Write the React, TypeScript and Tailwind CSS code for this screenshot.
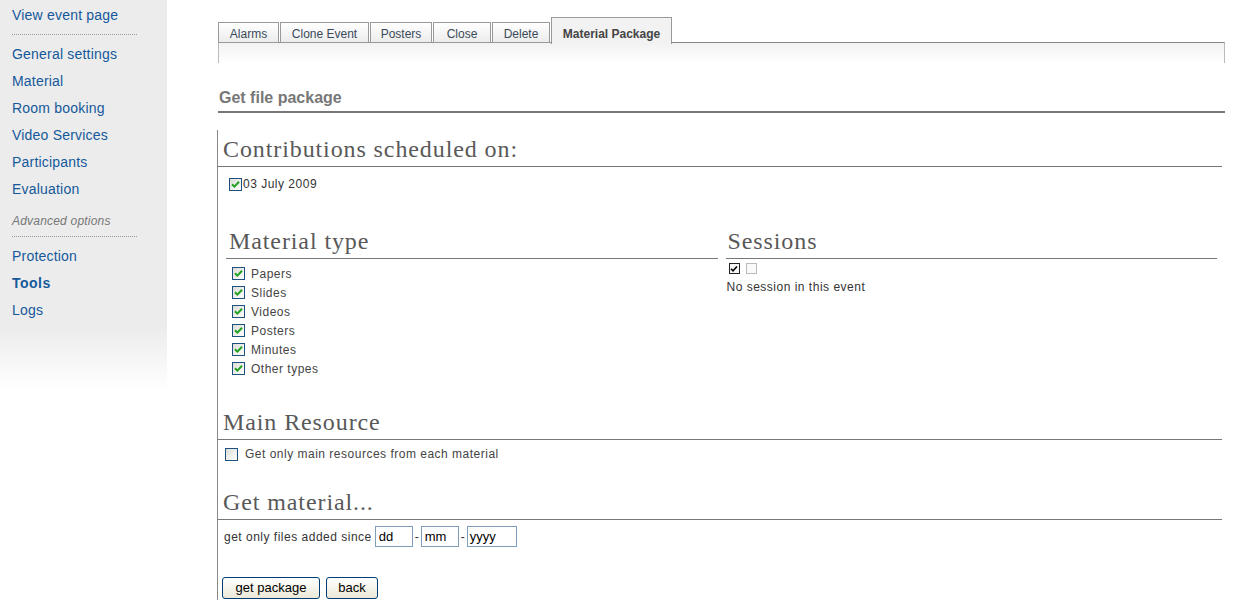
import React from 'react';

const sideLinks = ['General settings', 'Material', 'Room booking', 'Video Services', 'Participants', 'Evaluation'];

const tabs = [
  { label: 'Alarms', w: 'w-[61px]' },
  { label: 'Clone Event', w: 'w-[89px]' },
  { label: 'Posters', w: 'w-[62px]' },
  { label: 'Close', w: 'w-[58px]' },
  { label: 'Delete', w: 'w-[58px]' },
];

const materialTypes = ['Papers', 'Slides', 'Videos', 'Posters', 'Minutes', 'Other types'];

function XpCheck({ checked }: { checked: boolean }) {
  return (
    <span className="flex h-[13px] w-[13px] shrink-0 items-center justify-center border border-[#1c5180] bg-[linear-gradient(135deg,#dcdcd7,#ffffff)]">
      {checked && (
        <svg width="9" height="9" viewBox="0 0 9 9">
          <path d="M1 4.2 L3.4 6.6 L8 1.8" fill="none" stroke="#21a121" strokeWidth="2" />
        </svg>
      )}
    </span>
  );
}

function SmallCheck({ checked }: { checked: boolean }) {
  return (
    <span
      className={`flex h-[11px] w-[11px] items-center justify-center border ${
        checked ? 'border-[#222] bg-[#f4f4f4]' : 'border-[#bbb] bg-[#fafafa]'
      }`}
    >
      {checked && (
        <svg width="8" height="8" viewBox="0 0 8 8">
          <path d="M1 3.8 L3 5.8 L7 1.5" fill="none" stroke="#000" strokeWidth="1.6" />
        </svg>
      )}
    </span>
  );
}

function SectionTitle({ children, className = '' }: { children: React.ReactNode; className?: string }) {
  return (
    <div
      className={`border-b border-[#777] pb-[3px] font-['Liberation_Serif',serif] text-[24px] leading-[28px] tracking-[0.9px] text-[#595959] ${className}`}
    >
      {children}
    </div>
  );
}

export default function App() {
  return (
    <div className="flex min-h-[612px] bg-white font-['Liberation_Sans',Arial,sans-serif]">
      {/* Side menu */}
      <aside className="h-[390px] w-[167px] shrink-0 bg-[linear-gradient(to_bottom,#ececec_84%,#ffffff)] pt-[2px]">
        <div className="px-[12px] tracking-[0.2px]">
          <div className="h-[27px] text-[14px] leading-[27px] text-[#15599b]">View event page</div>
          <div className="mt-[5px] mb-[6px] w-[125px] border-b border-dotted border-[#999]" />
          {sideLinks.map((l) => (
            <div key={l} className="h-[27px] text-[14px] leading-[27px] text-[#15599b]">
              {l}
            </div>
          ))}
          <div className="mt-[10px] text-[12px] leading-[16px] italic text-[#777]">Advanced options</div>
          <div className="mt-[7px] mb-[6px] w-[125px] border-b border-dotted border-[#999]" />
          <div className="h-[27px] text-[14px] leading-[27px] text-[#15599b]">Protection</div>
          <div className="h-[27px] text-[14px] font-bold leading-[27px] tracking-[0.5px] text-[#15599b]">Tools</div>
          <div className="h-[27px] text-[14px] leading-[27px] text-[#15599b]">Logs</div>
        </div>
      </aside>

      {/* Main */}
      <main className="flex-1 pt-[17px] pl-[51px] pr-[11px]">
        <div className="relative z-10 flex items-end gap-[1px]">
          {tabs.map((t) => (
            <div
              key={t.label}
              className={`${t.w} h-[21px] border border-[#999] bg-[linear-gradient(to_bottom,#ffffff,#ececec)] text-center text-[12px] leading-[22px] text-[#3a4a5a]`}
            >
              {t.label}
            </div>
          ))}
          <div className="-mb-px h-[27px] w-[121px] border border-b-0 border-[#999] bg-[#f2f2f2] text-center text-[12px] leading-[33px] font-bold text-[#444]">
            Material Package
          </div>
        </div>
        <div className="-mt-px h-[21px] border-t border-x border-[#888] border-x-[#bbb] bg-[linear-gradient(to_bottom,#f2f2f2,#ffffff)]" />

        <div className="mt-[25px] border-b-2 border-[#777] pb-[3px] pl-px text-[16px] font-bold leading-[20px] text-[#777]">
          Get file package
        </div>

        <div className="mt-[17px] h-[470px] -ml-px border-l border-[#888] pr-[3px] pt-[5px]">
          <SectionTitle className="pl-[5px]">Contributions scheduled on:</SectionTitle>
          <div className="mt-[10px] flex items-center pl-[11px] text-[12px] leading-[14px] tracking-[0.5px] text-[#333]">
            <XpCheck checked />
            <span className="ml-px">03 July 2009</span>
          </div>

          <div className="mt-[36px] grid grid-cols-2 gap-[8px] pl-[8px] pr-[5px]">
            <div>
              <SectionTitle className="pl-[3px]">Material type</SectionTitle>
              <div className="mt-[5px] pl-[6px]">
                {materialTypes.map((m) => (
                  <div key={m} className="flex h-[19px] items-center text-[12px] tracking-[0.5px] text-[#444]">
                    <XpCheck checked />
                    <span className="ml-[6px]">{m}</span>
                  </div>
                ))}
              </div>
            </div>
            <div>
              <SectionTitle className="pl-[2px]">Sessions</SectionTitle>
              <div className="mt-[4px] flex gap-[6px] pl-[3px]">
                <SmallCheck checked />
                <SmallCheck checked={false} />
              </div>
              <div className="mt-[6px] pl-px text-[12px] leading-[14px] tracking-[0.5px] text-[#333]">
                No session in this event
              </div>
            </div>
          </div>

          <SectionTitle className="mt-[30px] pl-[5px]">Main Resource</SectionTitle>
          <div className="mt-[7px] flex items-center pl-[7px] text-[12px] leading-[14px] tracking-[0.5px] text-[#444]">
            <XpCheck checked={false} />
            <span className="ml-[7px]">Get only main resources from each material</span>
          </div>

          <SectionTitle className="mt-[27px] pl-[5px]">Get material...</SectionTitle>
          <div className="mt-[6px] flex items-center pl-[6px] text-[12px] text-[#333]">
            <span className="mr-[3px] tracking-[0.5px]">get only files added since</span>
            <span className="h-[21px] w-[38px] border border-[#7f9db9] pl-[3px] text-[13px] leading-[19px] text-black">dd</span>
            <span className="mx-[2px]">-</span>
            <span className="h-[21px] w-[38px] border border-[#7f9db9] pl-[3px] text-[13px] leading-[19px] text-black">mm</span>
            <span className="mx-[2px]">-</span>
            <span className="h-[21px] w-[50px] border border-[#7f9db9] pl-[2px] text-[13px] leading-[19px] text-black">yyyy</span>
          </div>

          <div className="mt-[30px] flex gap-[6px] pl-[4px]">
            <button className="h-[22px] w-[98px] rounded-[3px] border border-[#003c74] bg-[linear-gradient(to_bottom,#ffffff,#ece9d8)] text-[13px] leading-[20px] text-black">
              get package
            </button>
            <button className="h-[22px] w-[52px] rounded-[3px] border border-[#003c74] bg-[linear-gradient(to_bottom,#ffffff,#ece9d8)] text-[13px] leading-[20px] text-black">
              back
            </button>
          </div>
        </div>
      </main>
    </div>
  );
}
